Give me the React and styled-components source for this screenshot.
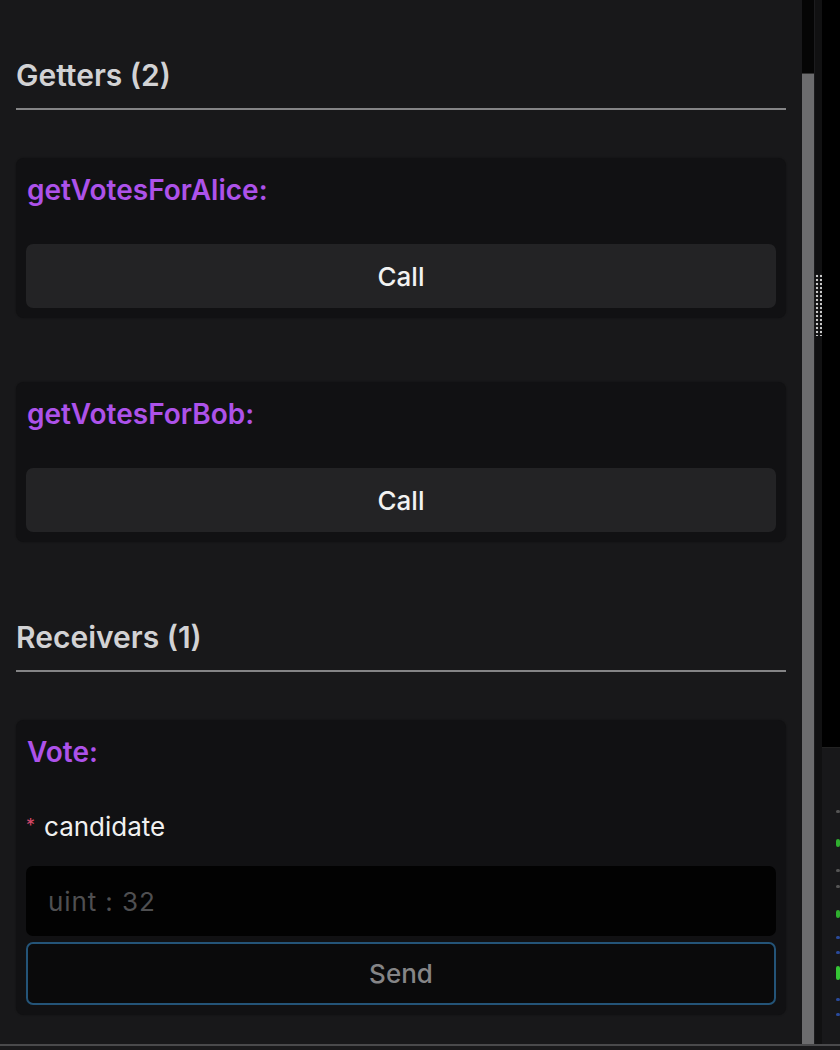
import React from "react";
import styled, { createGlobalStyle } from "styled-components";

const Global = createGlobalStyle`
  html, body { margin: 0; padding: 0; background: #000; }
  body { font-family: Inter, "Noto Sans", sans-serif; }
  * { box-sizing: border-box; }
`;

const Frame = styled.div`
  width: 840px;
  height: 1050px;
  display: flex;
  flex-direction: column;
  overflow: hidden;
  background: #000;
`;

const Body = styled.div`
  flex: 1;
  display: flex;
  min-height: 0;
`;

const Footer = styled.div`
  height: 6px;
  border-top: 2px solid #4a4a4c;
  background: #1a1a1c;
`;

const Main = styled.main`
  width: 802px;
  background: #18181a;
  padding: 57px 16px 0 16px;
  display: flex;
  flex-direction: column;
`;

const Section = styled.section`
  display: flex;
  flex-direction: column;
  & + & { margin-top: 77px; }
`;

const Heading = styled.h2`
  margin: 0;
  font-size: 30px;
  line-height: 36px;
  font-weight: 600;
  color: #d2d2d4;
  padding-bottom: 15px;
  border-bottom: 2px solid #848486;
  margin-bottom: 48px;
`;

const Cards = styled.div`
  display: flex;
  flex-direction: column;
  gap: 64px;
`;

const Card = styled.div`
  background: #111113;
  border-radius: 8px;
  padding: 10px;
  display: flex;
  flex-direction: column;
  box-shadow: 0 0 2px rgba(0, 0, 0, 0.4);
`;

const Title = styled.div`
  font-size: 28px;
  line-height: 44px;
  font-weight: 600;
  color: #ad52ea;
  padding-left: 1px;
  margin-bottom: ${(p) => p.$gap}px;
`;

const CallButton = styled.button`
  height: 64px;
  border: none;
  border-radius: 7px;
  background: #232325;
  color: #f2f2f2;
  font-family: inherit;
  font-size: 26px;
  font-weight: 500;
`;

const Label = styled.div`
  display: flex;
  align-items: center;
  gap: 9px;
  font-size: 26px;
  line-height: 32px;
  color: #f0f0f0;
  margin-bottom: 23px;
`;

const Star = styled.span`
  color: #d9486a;
  font-size: 18px;
  line-height: 1;
  align-self: flex-start;
  margin-top: 6px;
`;

const Input = styled.input`
  height: 70px;
  border: none;
  border-radius: 7px;
  background: #020202;
  padding: 0 22px;
  font-family: inherit;
  font-size: 26px;
  letter-spacing: 0.9px;
  color: #ddd;
  outline: none;
  &::placeholder { color: #4f4f51; }
`;

const SendButton = styled.button`
  margin-top: 6px;
  height: 63px;
  border: 2px solid #245478;
  border-radius: 7px;
  background: #0a0a0b;
  color: #858587;
  font-family: inherit;
  font-size: 26px;
  font-weight: 500;
`;

const Scrollbar = styled.div`
  width: 12px;
  display: flex;
  flex-direction: column;
  background: #000;
`;

const Track = styled.div`
  height: 74px;
  background: #050505;
  border-bottom: 1px solid #333;
`;

const Thumb = styled.div`
  flex: 1;
  background: #6c6c6e;
`;

const Splitter = styled.div`
  width: 8px;
  background: #111112;
  border-left: 1px solid #1c1c1e;
  display: flex;
  flex-direction: column;
  align-items: center;
  padding-top: 274px;
`;

const Grip = styled.div`
  width: 8px;
  height: 62px;
  background-image: radial-gradient(circle, #c8c8c8 1.2px, transparent 1.6px);
  background-size: 4px 4px;
  background-position: 0 0;
`;

const Side = styled.div`
  flex: 1;
  display: flex;
  flex-direction: column;
`;

const SideTop = styled.div`
  height: 748px;
  background: #000;
  border-bottom: 1px solid #222;
`;

const SideLog = styled.div`
  flex: 1;
  background: #18181a;
  padding: 50px 0 0 14px;
  display: flex;
  flex-direction: column;
  overflow: hidden;
`;

const Mark = styled.div`
  width: 4px;
  height: ${(p) => p.$h}px;
  margin-top: ${(p) => p.$mt}px;
  border-radius: 2px;
  background: ${(p) => p.$c};
`;

const marks = [
  { c: "#555", h: 3, mt: 12 },
  { c: "#2fae2f", h: 8, mt: 26 },
  { c: "#555", h: 3, mt: 22 },
  { c: "#555", h: 3, mt: 13 },
  { c: "#2fae2f", h: 8, mt: 22 },
  { c: "#2a4a9a", h: 3, mt: 18 },
  { c: "#2a4a9a", h: 3, mt: 12 },
  { c: "#35c535", h: 14, mt: 12 },
  { c: "#2a4a9a", h: 3, mt: 18 },
  { c: "#2a4a9a", h: 3, mt: 12 },
];

export default function App() {
  return (
    <>
      <Global />
      <Frame>
        <Body>
          <Main>
            <Section>
              <Heading>Getters (2)</Heading>
              <Cards>
                <Card>
                  <Title $gap={32}>getVotesForAlice:</Title>
                  <CallButton>Call</CallButton>
                </Card>
                <Card>
                  <Title $gap={32}>getVotesForBob:</Title>
                  <CallButton>Call</CallButton>
                </Card>
              </Cards>
            </Section>
            <Section>
              <Heading>Receivers (1)</Heading>
              <Cards>
                <Card>
                  <Title $gap={37}>Vote:</Title>
                  <Label>
                    <Star>*</Star>
                    candidate
                  </Label>
                  <Input placeholder="uint : 32" />
                  <SendButton>Send</SendButton>
                </Card>
              </Cards>
            </Section>
          </Main>
          <Scrollbar>
            <Track />
            <Thumb />
          </Scrollbar>
          <Splitter>
            <Grip />
          </Splitter>
          <Side>
            <SideTop />
            <SideLog>
              {marks.map((m, i) => (
                <Mark key={i} $c={m.c} $h={m.h} $mt={m.mt} />
              ))}
            </SideLog>
          </Side>
        </Body>
        <Footer />
      </Frame>
    </>
  );
}
